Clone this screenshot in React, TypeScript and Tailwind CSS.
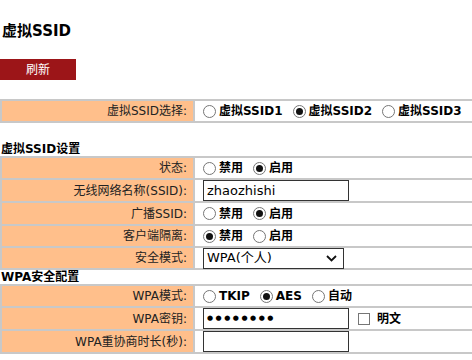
import type { FC, ReactNode } from 'react';

const font = { fontFamily: '"DejaVu Sans", "Noto Sans CJK SC", sans-serif' };

const Radio: FC<{ checked?: boolean; label: string }> = ({ checked, label }) => (
  <span className="mr-[10px] inline-flex items-center gap-[3px]">
    <span className="flex h-[13px] w-[13px] items-center justify-center rounded-full border border-[#767676] bg-white">
      {checked && <span className="h-[7px] w-[7px] rounded-full bg-[#111]" />}
    </span>
    <span className="font-bold text-[12px] text-black">{label}</span>
  </span>
);

const Row: FC<{ label: string; h?: string; children: ReactNode }> = ({ label, h = 'h-[22px]', children }) => (
  <div className={`flex ${h} border-b-2 border-[#c8c8c8]`}>
    <div className="flex w-[193px] shrink-0 items-center justify-end border-r-2 border-[#c8c8c8] bg-[#ffbf8b] pr-[6px] text-[12px] text-[#222]">
      {label}
    </div>
    <div className="flex flex-1 items-center pl-[8px]">{children}</div>
  </div>
);

const Table: FC<{ children: ReactNode }> = ({ children }) => (
  <div className="border-l-2 border-t-2 border-[#c8c8c8]">{children}</div>
);

const TextBox: FC<{ value?: string; dots?: boolean }> = ({ value = '', dots }) => (
  <div
    className={`flex h-[21px] w-[146px] items-center border border-[#333] bg-white px-[3px] ${dots ? 'text-[7px] tracking-[2.5px]' : 'text-[13px]'} text-black`}
  >
    {value}
  </div>
);

export default function App() {
  return (
    <div className="h-[360px] w-[472px] overflow-hidden bg-white" style={font}>
      <div className="px-[2px] pt-[22px]">
        <h1 className="text-[15px] font-bold leading-[18px] text-black">虚拟SSID</h1>
      </div>
      <div className="mt-[19px] flex h-[21px] w-[76px] items-center justify-center bg-[#9c1518] text-[12px] text-white">
        刷新
      </div>

      <div className="mt-[19px]">
        <Table>
          <Row label="虚拟SSID选择:">
            <Radio label="虚拟SSID1" />
            <Radio checked label="虚拟SSID2" />
            <Radio label="虚拟SSID3" />
          </Row>
        </Table>
      </div>

      <div className="mt-[19px] px-[1px] text-[12px] font-bold leading-[14px] text-black">虚拟SSID设置</div>
      <Table>
        <Row label="状态:">
          <Radio label="禁用" />
          <Radio checked label="启用" />
        </Row>
        <Row label="无线网络名称(SSID):" h="h-[23px]">
          <TextBox value="zhaozhishi" />
        </Row>
        <Row label="广播SSID:" h="h-[23px]">
          <Radio label="禁用" />
          <Radio checked label="启用" />
        </Row>
        <Row label="客户端隔离:">
          <Radio checked label="禁用" />
          <Radio label="启用" />
        </Row>
        <Row label="安全模式:">
          <div className="flex h-[21px] w-[141px] items-center justify-between border border-[#333] bg-white pl-[3px] pr-[6px] text-[13px] text-black">
            <span>WPA(个人)</span>
            <svg width="11" height="7" viewBox="0 0 11 7" fill="none">
              <path d="M1 1l4.5 4.5L10 1" stroke="#111" strokeWidth="1.8" />
            </svg>
          </div>
        </Row>
      </Table>

      <div className="px-[1px] text-[12px] font-bold leading-[14px] text-black">WPA安全配置</div>
      <Table>
        <Row label="WPA模式:">
          <Radio label="TKIP" />
          <Radio checked label="AES" />
          <Radio label="自动" />
        </Row>
        <Row label="WPA密钥:" h="h-[23px]">
          <TextBox value="●●●●●●●●" dots />
          <span className="ml-[9px] h-[12px] w-[12px] border border-[#767676] bg-white" />
          <span className="ml-[7px] text-[12px] font-bold text-black">明文</span>
        </Row>
        <Row label="WPA重协商时长(秒):" h="h-[23px]">
          <TextBox />
        </Row>
      </Table>
    </div>
  );
}
